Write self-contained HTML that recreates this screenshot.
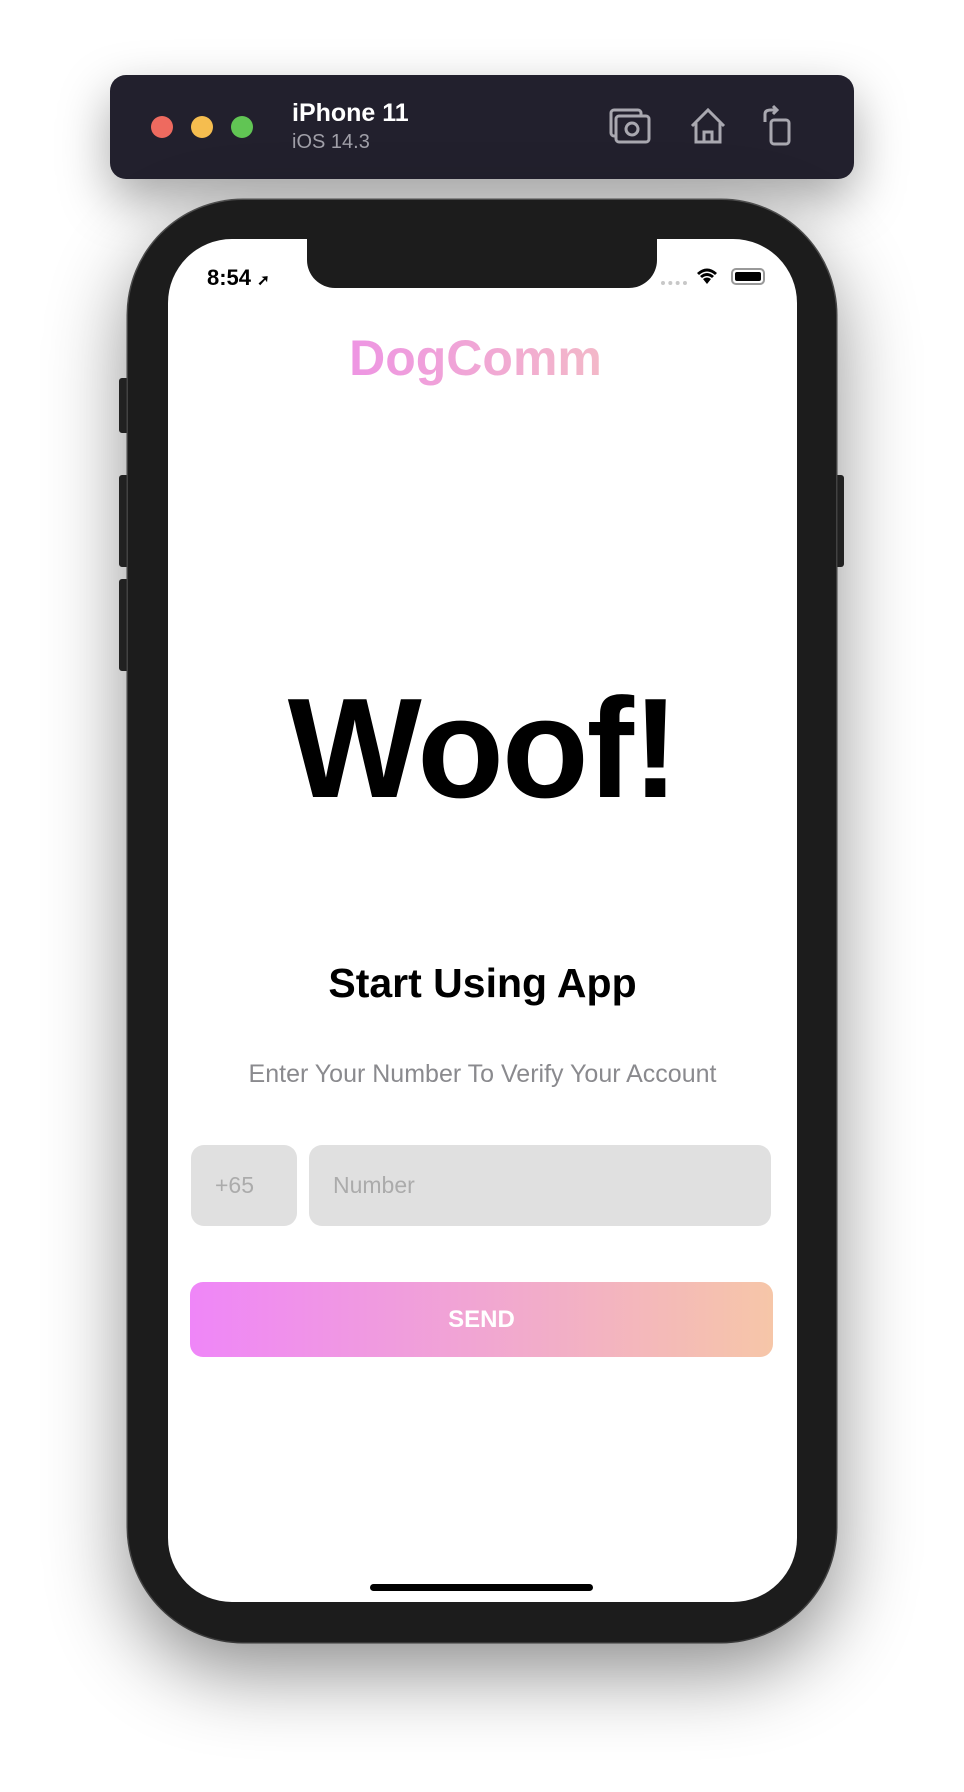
<!DOCTYPE html>
<html><head><meta charset="utf-8">
<style>
*{margin:0;padding:0;box-sizing:border-box}
body{width:964px;height:1792px;background:#fff;position:relative;overflow:hidden;font-family:"Liberation Sans",sans-serif}
.bar{position:absolute;left:110px;top:75px;width:737px;height:104px;background:#22202d;border-radius:16px;box-shadow:0 20px 50px rgba(0,0,0,.35)}
.dot{position:absolute;top:116px;width:22px;height:22px;border-radius:50%}
.phone{position:absolute;left:127px;top:200px;width:703px;height:1430px;background:#1c1c1c;border-radius:115px;box-shadow:0 30px 80px rgba(0,0,0,.45),0 0 0 1.5px #555}
.btn{position:absolute;background:#2a2a2a;border-radius:3px}
.screen{position:absolute;left:167px;top:239px;width:625px;height:1351px;background:#fff;border-radius:64px;overflow:hidden}
.notch{position:absolute;left:137px;top:-2px;width:350px;height:51px;background:#1c1c1c;border-radius:0 0 28px 28px}
.c{position:absolute;left:0;width:625px;text-align:center}
</style></head><body>
<div class="bar" style="width:744px"></div>
<div class="dot" style="left:151px;background:#ee6a5f"></div>
<div class="dot" style="left:191px;background:#f5bd4f"></div>
<div class="dot" style="left:231px;background:#61c554"></div>
<div style="position:absolute;left:292px;top:99px;color:#fff;font-weight:bold;font-size:25px">iPhone 11</div>
<div style="position:absolute;left:292px;top:131px;color:#a09fa8;font-size:20px">iOS 14.3</div>
<svg style="position:absolute;left:607px;top:104px" width="200" height="46" viewBox="0 0 200 46" fill="none" stroke="#a9a8b0" stroke-width="3">
<rect x="4" y="6" width="30" height="26" rx="3"/><rect x="9" y="12" width="33" height="26" rx="3" fill="#22202d"/><circle cx="25" cy="25" r="6"/>
<path d="M85 22 L101 6 L117 22 M89 19 V38 H113 V19 M97 38 V28 H105 V38"/>
<rect x="164" y="16" width="18" height="24" rx="3"/><path d="M158 18 V10 Q158 6 164 6 H170 M166 2 L170 6 L166 10"/>
</svg>
<div class="btn" style="left:119px;top:378px;width:10px;height:55px"></div>
<div class="btn" style="left:119px;top:475px;width:10px;height:92px"></div>
<div class="btn" style="left:119px;top:579px;width:10px;height:92px"></div>
<div class="btn" style="left:834px;top:475px;width:10px;height:92px"></div>
<div class="phone" style="left:128px;width:708px;height:1442px"></div>
<div class="screen" style="left:168px;width:629px;height:1363px">
<div class="notch" style="left:139px"></div>
<div style="position:absolute;left:39px;top:26px;font-size:22px;font-weight:bold;color:#000">8:54 <span style="font-size:15px">➚</span></div>
<div style="position:absolute;left:493px;top:42px;width:26px;height:4px;border-top:4px dotted #c8c8c8"></div>
<svg style="position:absolute;left:528px;top:28px" width="22" height="18" viewBox="0 0 22 18"><path d="M11 17 L7 12 Q11 9 15 12 Z M4 9 Q11 3 18 9 L16 11 Q11 7 6 11 Z M1 6 Q11 -3 21 6 L19 8 Q11 1 3 8 Z" fill="#000"/></svg>
<div style="position:absolute;left:563px;top:29px;width:34px;height:17px;border:2px solid #999;border-radius:5px;padding:2px"><div style="width:100%;height:100%;background:#000;border-radius:2px"></div></div>
<div class="c" style="top:90px;left:-7px;width:629px;font-size:50px;font-weight:bold;"><span style="background:linear-gradient(90deg,#ee95e3,#f3b8c8);-webkit-background-clip:text;background-clip:text;color:transparent">DogComm</span></div>
<div class="c" style="top:425px;width:629px;font-size:142px;font-weight:bold;letter-spacing:-2px;color:#000;line-height:1.2">Woof!</div>
<div class="c" style="top:721px;width:629px;font-size:41px;font-weight:bold;color:#000">Start Using App</div>
<div class="c" style="top:821px;width:629px;font-size:25px;color:#8a8a8e">Enter Your Number To Verify Your Account</div>
<div style="position:absolute;left:23px;top:906px;width:106px;height:81px;background:#e0e0e0;border-radius:13px;color:#ababab;font-size:23px;line-height:81px;padding-left:24px">+65</div>
<div style="position:absolute;left:141px;top:906px;width:462px;height:81px;background:#e0e0e0;border-radius:13px;color:#ababab;font-size:23px;line-height:81px;padding-left:24px">Number</div>
<div style="position:absolute;left:22px;top:1043px;width:583px;height:75px;border-radius:13px;background:linear-gradient(90deg,#ef86f8,#f1a6d2 50%,#f6c6a8);color:#fff;font-size:24px;font-weight:bold;text-align:center;line-height:75px">SEND</div>
<div style="position:absolute;left:202px;top:1345px;width:223px;height:7px;background:#000;border-radius:4px"></div>
</div>
</body></html>
